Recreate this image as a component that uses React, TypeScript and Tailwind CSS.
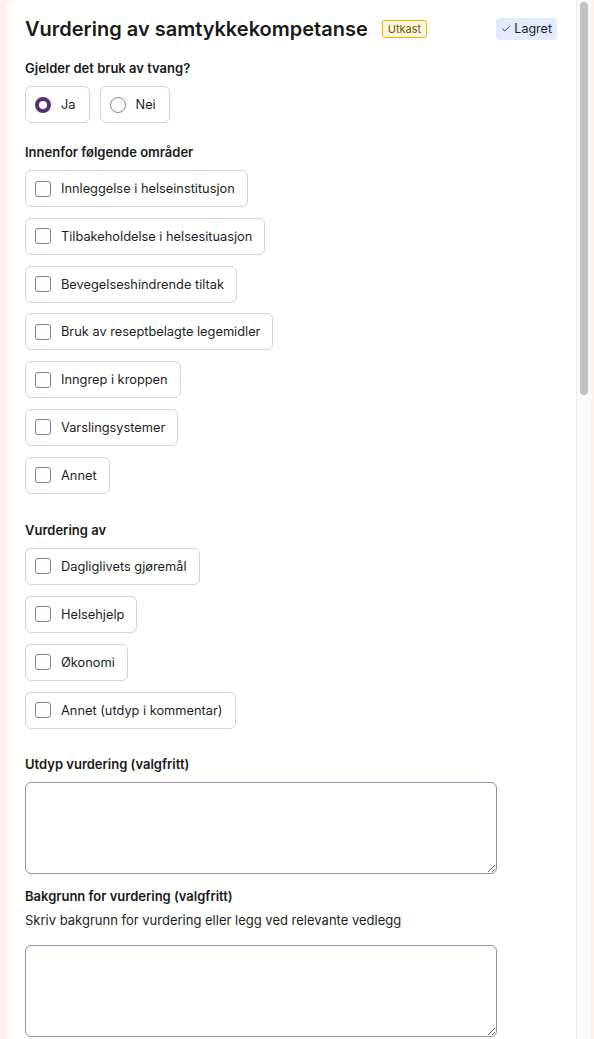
import React from "react";
import { Check } from "lucide-react";

const boxBorder = "border-[#d9cfdd]";

function CheckItem({ label }: { label: string }) {
  return (
    <label className={`flex h-[37px] w-fit items-center gap-[10px] rounded-[6px] border ${boxBorder} bg-white pl-[9px] pr-[12px] text-[12.8px] text-[#1e1e1e]`}>
      <span className="h-4 w-4 shrink-0 rounded-[3px] border border-[#8e7899] bg-white" />
      <span>{label}</span>
    </label>
  );
}

function RadioItem({ label, checked }: { label: string; checked?: boolean }) {
  return (
    <label className={`flex h-[37px] w-fit items-center gap-[10px] rounded-[6px] border ${boxBorder} bg-white pl-[9px] pr-[13px] text-[12.8px] text-[#1e1e1e]`}>
      {checked ? (
        <span className="h-4 w-4 shrink-0 rounded-full border-[4.5px] border-[#5a2d6c] bg-white" />
      ) : (
        <span className="h-4 w-4 shrink-0 rounded-full border border-[#8e7899] bg-white" />
      )}
      <span>{label}</span>
    </label>
  );
}

function Label({ children, className = "" }: { children: React.ReactNode; className?: string }) {
  return <div className={`text-[13px] font-semibold leading-5 text-[#1a1a1a] ${className}`}>{children}</div>;
}

export default function App() {
  const omrader = [
    "Innleggelse i helseinstitusjon",
    "Tilbakeholdelse i helsesituasjon",
    "Bevegelseshindrende tiltak",
    "Bruk av reseptbelagte legemidler",
    "Inngrep i kroppen",
    "Varslingsystemer",
    "Annet",
  ];
  const vurdering = ["Dagliglivets gjøremål", "Helsehjelp", "Økonomi", "Annet (utdyp i kommentar)"];

  return (
    <div className="flex h-screen w-full overflow-hidden bg-[#fcefee] pl-[7px] pr-[3px] font-['Inter',sans-serif]">
      <div className="flex h-full flex-1 overflow-hidden rounded-tl-[8px] bg-white">
        <div className="h-full flex-1 overflow-hidden pl-[18px] pr-[19px] pt-[15px]">
          <div className="flex h-[28px] items-center justify-between">
            <div className="flex items-center gap-[14px]">
              <h1 className="text-[20px] font-semibold leading-7 text-[#1a1a1a]">Vurdering av samtykkekompetanse</h1>
              <span className="flex h-[18px] items-center rounded-[3px] border border-[#efb300] bg-[#fff8e1] px-[5px] text-[11px] text-[#6f5300]">
                Utkast
              </span>
            </div>
            <span className="flex h-[22px] items-center gap-[3px] rounded-[4px] bg-[#e2eafc] px-[5px] text-[12.5px] text-[#1e1e1e]">
              <Check size={10} strokeWidth={2} />
              Lagret
            </span>
          </div>

          <Label className="mt-[15px]">Gjelder det bruk av tvang?</Label>
          <div className="mt-[8px] flex gap-[10px]">
            <RadioItem label="Ja" checked />
            <RadioItem label="Nei" />
          </div>

          <Label className="mt-[19px]">Innenfor følgende områder</Label>
          <div className="mt-[8px] flex flex-col gap-[10.8px]">
            {omrader.map((o) => (
              <CheckItem key={o} label={o} />
            ))}
          </div>

          <Label className="mt-[26px]">Vurdering av</Label>
          <div className="mt-[8px] flex flex-col gap-[11px]">
            {vurdering.map((o) => (
              <CheckItem key={o} label={o} />
            ))}
          </div>

          <Label className="mt-[25px]">Utdyp vurdering (valgfritt)</Label>
          <textarea className="mt-[8px] block h-[92px] w-[472px] resize-y rounded-[6px] border border-[#9c88a4] bg-white outline-none" />

          <Label className="mt-[12px]">Bakgrunn for vurdering (valgfritt)</Label>
          <div className="mt-[4px] text-[13px] leading-5 text-[#1e1e1e]">
            Skriv bakgrunn for vurdering eller legg ved relevante vedlegg
          </div>
          <textarea className="mt-[15px] block h-[92px] w-[472px] resize-y rounded-[6px] border border-[#9c88a4] bg-white outline-none" />
        </div>
        <div className="flex h-full w-[15px] shrink-0 flex-col border-l border-[#ececec] bg-[#fafafa] pl-[3px] pr-[3px] pt-[2px]">
          <div className="h-[393px] w-full rounded-full bg-[#c1c1c1]" />
        </div>
      </div>
    </div>
  );
}
